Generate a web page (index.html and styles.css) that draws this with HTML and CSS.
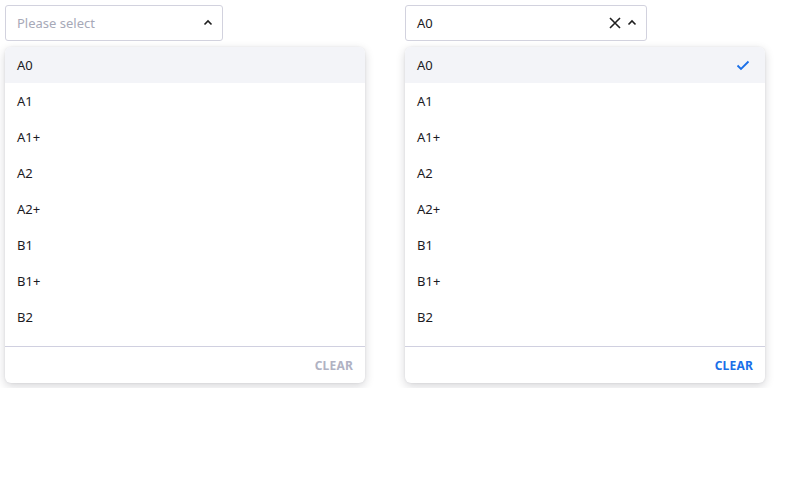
FILE: index.html
```html
<!DOCTYPE html>
<html>
<head>
<meta charset="utf-8">
<link rel="stylesheet" href="styles.css">
</head>
<body>
<div class="page">
  <div class="select-wrap">
    <div class="select select-left">
      <span class="placeholder">Please select</span>
      <span class="icons">
        <svg class="chev" width="12" height="12" viewBox="0 0 12 12"><path d="M2.5 7.5 L6 4 L9.5 7.5" fill="none" stroke="#1f1f1f" stroke-width="1.6"/></svg>
      </span>
    </div>
    <div class="menu">
      <ul class="list">
        <li class="item active">A0</li>
        <li class="item">A1</li>
        <li class="item">A1+</li>
        <li class="item">A2</li>
        <li class="item">A2+</li>
        <li class="item">B1</li>
        <li class="item">B1+</li>
        <li class="item">B2</li>
      </ul>
      <div class="footer"><span class="clear disabled">CLEAR</span></div>
    </div>
  </div>
  <div class="select-wrap">
    <div class="select select-right">
      <span class="value">A0</span>
      <span class="icons">
        <svg class="x" width="14" height="14" viewBox="0 0 14 14"><path d="M2 2 L12 12 M12 2 L2 12" fill="none" stroke="#1f1f1f" stroke-width="1.6"/></svg>
        <svg class="chev" width="12" height="12" viewBox="0 0 12 12"><path d="M2.5 7.5 L6 4 L9.5 7.5" fill="none" stroke="#1f1f1f" stroke-width="1.6"/></svg>
      </span>
    </div>
    <div class="menu">
      <ul class="list">
        <li class="item active">A0<svg class="check" width="16" height="16" viewBox="0 0 16 16"><path d="M2.5 8.5 L6 12 L13.5 4.5" fill="none" stroke="#1a6fe8" stroke-width="1.8"/></svg></li>
        <li class="item">A1</li>
        <li class="item">A1+</li>
        <li class="item">A2</li>
        <li class="item">A2+</li>
        <li class="item">B1</li>
        <li class="item">B1+</li>
        <li class="item">B2</li>
      </ul>
      <div class="footer"><span class="clear">CLEAR</span></div>
    </div>
  </div>
</div>
</body>
</html>
```

FILE: styles.css
```css
* { box-sizing: border-box; }
html, body { margin: 0; padding: 0; background: #fff; }
body {
  font-family: "Noto Sans", "Open Sans", sans-serif;
  font-size: 13px;
  color: #1b1b1f;
}
.page {
  display: flex;
  gap: 40px;
  padding: 5px;
  align-items: flex-start;
}
.select-wrap {
  width: 360px;
  display: flex;
  flex-direction: column;
  gap: 6px;
}
.select {
  height: 36px;
  border: 1px solid #d2d2de;
  border-radius: 3px;
  display: flex;
  align-items: center;
  justify-content: space-between;
  padding: 0 8px 0 11px;
  background: #fff;
}
.select-left { width: 218px; }
.select-right { width: 242px; }
.placeholder { color: #a7a9b8; }
.value { color: #1b1b1f; }
.icons { display: flex; align-items: center; gap: 4px; }
.chev { display: block; }
.x { display: block; }
.menu {
  width: 360px;
  background: #fff;
  border-radius: 6px;
  box-shadow: 0 3px 10px rgba(20, 20, 40, 0.18), 0 0 2px rgba(20,20,40,0.08);
  overflow: hidden;
}
.list {
  list-style: none;
  margin: 0;
  padding: 0 0 11px 0;
  height: 299px;
}
.item {
  height: 36px;
  display: flex;
  align-items: center;
  justify-content: space-between;
  padding: 0 14px 0 12px;
}
.item.active { background: #f3f4f8; }
.check { display: block; }
.footer {
  height: 37px;
  border-top: 1px solid #d0d0e0;
  display: flex;
  align-items: center;
  justify-content: flex-end;
  padding: 1px 12px 0 12px;
}
.clear {
  font-weight: 700;
  font-size: 12px;
  color: #1a6fe8;
  letter-spacing: 0.2px;
}
.clear.disabled { color: #b0b2c3; }
```
